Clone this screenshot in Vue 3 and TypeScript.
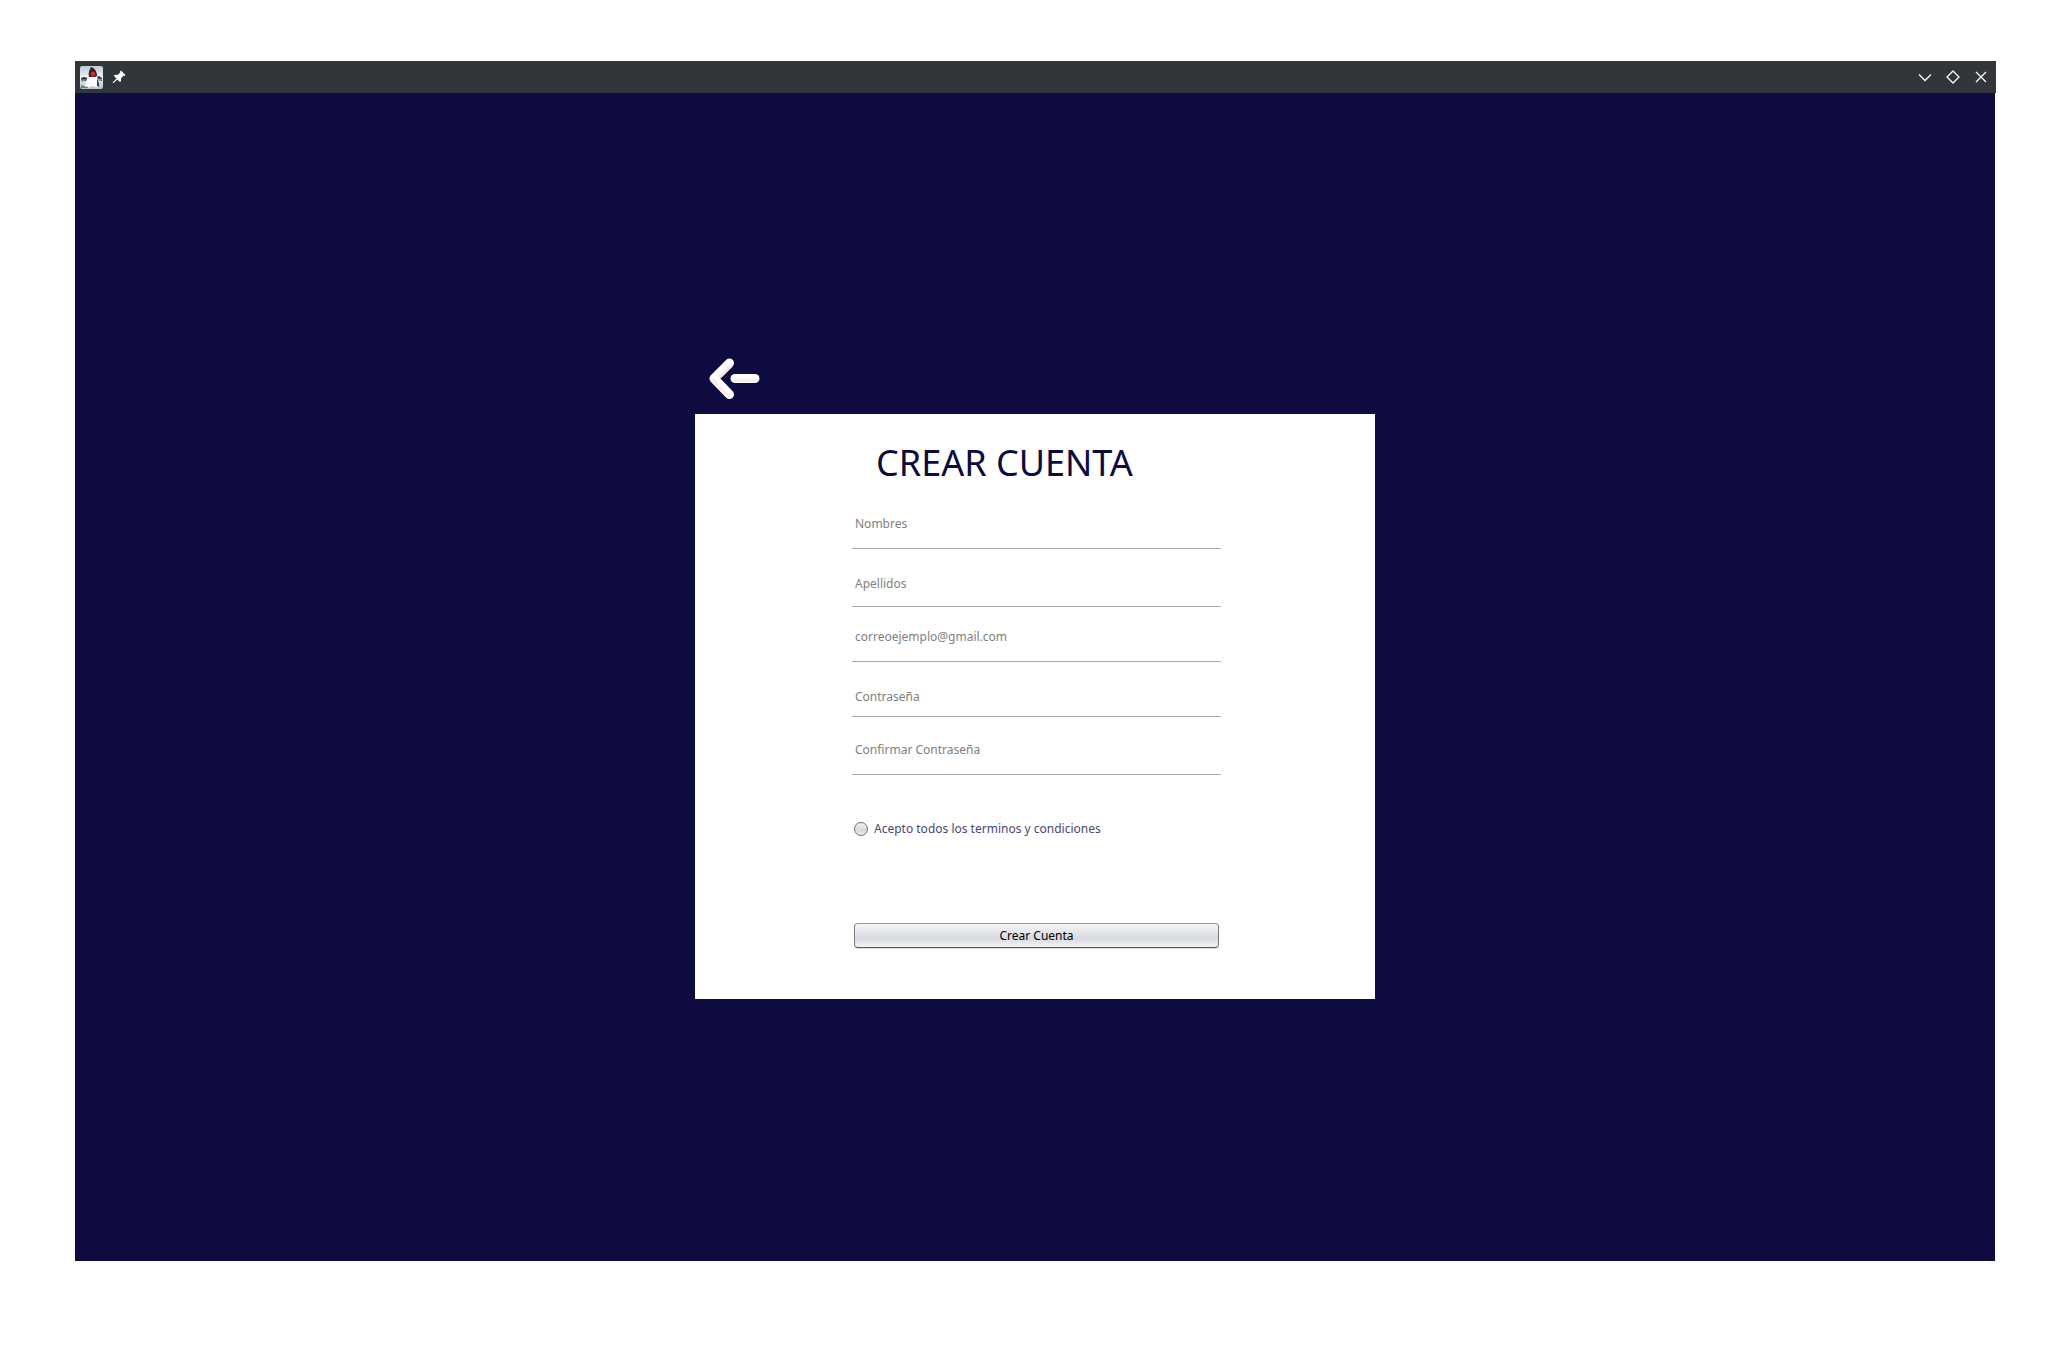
<script setup lang="ts">
import { reactive, ref } from 'vue'

interface Field {
  id: string
  label: string
  type: string
  spacing: string[]
}

const fields: Field[] = [
  { id: 'nombres', label: 'Nombres', type: 'text', spacing: [] },
  { id: 'apellidos', label: 'Apellidos', type: 'text', spacing: ['tall', 'medium'] },
  { id: 'correo', label: 'correoejemplo@gmail.com', type: 'email', spacing: [] },
  { id: 'contrasena', label: 'Contraseña', type: 'password', spacing: ['snug'] },
  { id: 'confirmar', label: 'Confirmar Contraseña', type: 'password', spacing: ['tall'] },
]

const values = reactive<Record<string, string>>({
  nombres: '',
  apellidos: '',
  correo: '',
  contrasena: '',
  confirmar: '',
})
const accepted = ref('')
</script>

<template>
  <div class="page">
    <div class="window">
      <header class="titlebar">
        <div class="titlebar-group">
          <svg class="app-icon" viewBox="0 0 23 23" aria-hidden="true">
            <defs>
              <linearGradient id="icon-bg" x1="0" y1="0" x2="0" y2="1">
                <stop offset="0" stop-color="#b9cad8" />
                <stop offset="0.5" stop-color="#eef3f6" />
                <stop offset="1" stop-color="#b4c1cb" />
              </linearGradient>
            </defs>
            <rect width="23" height="23" rx="2" fill="url(#icon-bg)" />
            <path d="M1 12 L4 11 L8 12 L7 15 L2 15 Z" fill="#30363b" />
            <path d="M16 11 L19 10 L22 12 L22 15 L17 15 Z" fill="#3a4146" />
            <path d="M1 14 L6 13 L5 15 L2 16 Z" fill="#7390a5" />
            <path d="M18 13 L22 13 L21 15 L18 15 Z" fill="#91a6b4" />
            <path d="M5 21 C6 15 7 11 10 9 L16 8 C18 13 20 17 19 21 C16 22 14 20 12 20 C9 21 7 23 5 21 Z" fill="#f8fafb" />
            <path d="M11 1 C15 2 17 6 17 10 L15 11 L9 11 C8 8 9 4 11 1 Z" fill="#25272b" />
            <path d="M17 12 C18 15 20 18 19 21 L17 20 Z" fill="#39434b" />
            <path d="M1 19 Q5 21 8 21 L8 22 L1 22 Z" fill="#677680" />
            <circle cx="13" cy="8" r="2.500" fill="#dc1717" />
            <circle cx="13" cy="7.500" r="1" fill="#f14a43" />
          </svg>
          <button class="tool" type="button" aria-label="Fijar ventana">
            <svg width="14" height="14" viewBox="0 0 14 14" aria-hidden="true">
              <path
                d="M9 0.500 L13.500 5 L12.500 6 L11.500 5.800 L9 8.500 L9 11 L8 12 L5.500 9.400 L1.500 13 L0.800 13 L0.800 12.300 L4.500 8.400 L1.800 5.800 L2.800 4.800 L5.400 5 L8.200 2.400 L8 1.500 Z"
                fill="#fcfcfc"
              />
            </svg>
          </button>
        </div>
        <div class="titlebar-group controls">
          <button class="tool" type="button" aria-label="Minimizar">
            <svg width="16" height="16" viewBox="0 0 16 16" aria-hidden="true">
              <path d="M2 5.500 L8 11.500 L14 5.500" class="stroke" />
            </svg>
          </button>
          <button class="tool" type="button" aria-label="Restaurar">
            <svg width="16" height="16" viewBox="0 0 16 16" aria-hidden="true">
              <path d="M8 2 L14 8 L8 14 L2 8 Z" class="stroke" />
            </svg>
          </button>
          <button class="tool" type="button" aria-label="Cerrar">
            <svg width="16" height="16" viewBox="0 0 16 16" aria-hidden="true">
              <path d="M3 3 L13 13 M13 3 L3 13" class="stroke" />
            </svg>
          </button>
        </div>
      </header>

      <main class="stage">
        <div class="content">
          <button class="back" type="button" aria-label="Volver">
            <svg width="52" height="42" viewBox="0 0 52 42" aria-hidden="true">
              <path d="M20.500 5 L5 20.500 L20.500 36.500" fill="none" stroke="#fff" stroke-width="9" stroke-linecap="round" stroke-linejoin="round" />
              <path d="M26 20.500 H46" fill="none" stroke="#fff" stroke-width="9" stroke-linecap="round" />
              <path d="M4 22.500 L19.500 38 M11.500 18.500 L22 8" fill="none" stroke="#ffe9e6" stroke-width="3" stroke-linecap="round" />
              <path d="M26 22.500 H46" fill="none" stroke="#ffefec" stroke-width="3" stroke-linecap="round" />
            </svg>
          </button>

          <form class="card" @submit.prevent>
            <h1>CREAR CUENTA</h1>
            <div v-for="field in fields" :key="field.id" class="field" :class="field.spacing">
              <input
                :id="field.id"
                v-model="values[field.id]"
                :type="field.type"
                :placeholder="field.label"
                :aria-label="field.label"
              />
            </div>
            <div class="terms">
              <input id="terminos" v-model="accepted" type="radio" value="si" />
              <label for="terminos">Acepto todos los terminos y condiciones</label>
            </div>
            <button class="submit" type="submit">Crear Cuenta</button>
          </form>
        </div>
      </main>
    </div>
  </div>
</template>

<style>
body {
  margin: 0;
  background: #fff;
}
</style>

<style scoped>
.page {
  box-sizing: border-box;
  display: flex;
  min-height: 100vh;
  padding: 61px 74px 89px 75px;
  font-family: 'Noto Sans', 'Open Sans', sans-serif;
  font-size: 12px;
  line-height: 16px;
}

.window {
  display: flex;
  flex: 1;
  flex-direction: column;
}

.titlebar {
  box-sizing: border-box;
  display: flex;
  align-items: center;
  justify-content: space-between;
  height: 32px;
  padding: 0 7px 0 5px;
  background: #31363b;
}

.titlebar-group {
  display: flex;
  align-items: center;
  gap: 9px;
}

.controls {
  gap: 12px;
}

.app-icon {
  width: 23px;
  height: 23px;
}

.tool,
.back {
  display: flex;
  padding: 0;
  border: 0;
  background: none;
}

.stroke {
  fill: none;
  stroke: #fcfcfc;
  stroke-width: 1.3;
}

.stage {
  display: flex;
  flex: 1;
  align-items: center;
  justify-content: center;
  margin-right: 1px;
  background: #0e0b40;
}

.content {
  width: 680px;
}

.back {
  margin: 0 0 14px 14px;
  padding-top: 3px;
}

.card {
  box-sizing: border-box;
  padding: 25px 154px 51px 157px;
  background: #fff;
}

h1 {
  margin: 0 0 7px 24px;
  color: #0e0b40;
  font-size: 36px;
  font-weight: 400;
  line-height: 48px;
  white-space: nowrap;
}

.field {
  box-sizing: border-box;
  display: flex;
  align-items: flex-end;
  height: 55px;
  padding-bottom: 16px;
  border-bottom: 1px solid #a4a7b0;
}

.tall {
  height: 58px;
}

.medium {
  padding-bottom: 14px;
}

.snug {
  padding-bottom: 11px;
}

.field input {
  width: 100%;
  height: 16px;
  padding: 0 3px;
  border: 0;
  outline: 0;
  background: transparent;
  color: #0e0b40;
  font: inherit;
}

.field input::placeholder {
  color: #808080;
  opacity: 1;
}

.terms {
  display: flex;
  align-items: center;
  gap: 6px;
  margin: 46px 0 86px 2px;
  color: #4b4770;
}

.terms input {
  box-sizing: border-box;
  width: 14px;
  height: 14px;
  margin: 0;
  border: 1px solid #6b6e75;
  border-radius: 50%;
  appearance: none;
  background: linear-gradient(#f2f3f5, #d5d8dd 60%, #e9ecf0);
}

.terms input:checked {
  background: radial-gradient(#202328 30%, #dcdfe4 35%);
}

.submit {
  box-sizing: border-box;
  display: block;
  width: 365px;
  height: 25px;
  margin-left: 2px;
  padding: 1px 0 0;
  border: 1px solid #777a80;
  border-color: #94979d #777a80 #54575d;
  border-radius: 4px;
  background: linear-gradient(#f4f5f7, #e3e5e9 40%, #d6d9df 60%, #f0f3f8);
  box-shadow: 0 1px 0 #dcdee0;
  color: #000;
  font: inherit;
}
</style>
